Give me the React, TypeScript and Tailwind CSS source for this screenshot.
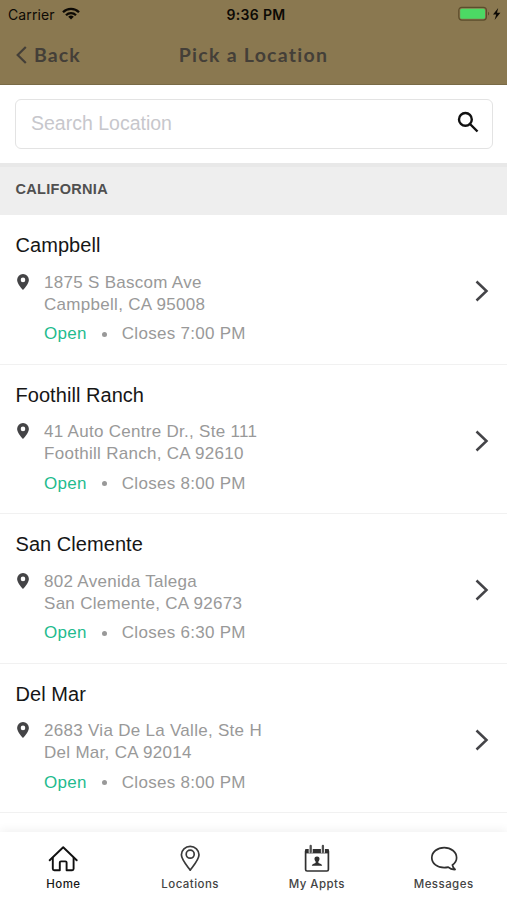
import React from "react";

const locations = [
  { name: "Campbell", street: "1875 S Bascom Ave", city: "Campbell, CA 95008", closes: "7:00 PM" },
  { name: "Foothill Ranch", street: "41 Auto Centre Dr., Ste 111", city: "Foothill Ranch, CA 92610", closes: "8:00 PM" },
  { name: "San Clemente", street: "802 Avenida Talega", city: "San Clemente, CA 92673", closes: "6:30 PM" },
  { name: "Del Mar", street: "2683 Via De La Valle, Ste H", city: "Del Mar, CA 92014", closes: "8:00 PM" },
];

function WifiIcon() {
  return (
    <svg className="mb-[2px] ml-[7px] h-[13px] w-[18px]" viewBox="0 0 18 13" fill="none" stroke="#0d0a05" strokeWidth="2.3">
      <path d="M1 5.2a11.3 11.3 0 0 1 16 0" />
      <path d="M4 8.2a7.1 7.1 0 0 1 10 0" />
      <path d="M9 12.6 6.2 9.8a4 4 0 0 1 5.6 0z" fill="#0d0a05" stroke="none" />
    </svg>
  );
}

function BatteryIcon() {
  return (
    <svg className="mb-[1px] h-[16px] w-[46px]" viewBox="0 0 46 16">
      <rect x="0.8" y="1.3" width="27.6" height="12.8" rx="3" fill="none" stroke="#5c4d2c" strokeWidth="1.2" />
      <rect x="2.2" y="2.7" width="24.8" height="10" rx="1.5" fill="#4cd964" />
      <path d="M30 5.8c1.6.5 1.6 3.3 0 3.8z" fill="#5c4d2c" />
      <path d="M40.2 2 35 8.6h3.2L36.6 14l5.8-7.2h-3.4z" fill="#0d0a05" />
    </svg>
  );
}

function PinIcon() {
  return (
    <svg className="mt-[2px] ml-[1px] h-[16px] w-[12px] shrink-0" viewBox="0 0 12 16">
      <path
        fillRule="evenodd"
        fill="#444446"
        d="M6 0a5.9 5.9 0 0 0-5.9 5.900C.1 10 6 16 6 16s5.900-6 5.900-10.100A5.900 5.900 0 0 0 6 0zm0 3.600a2.300 2.300 0 1 1 0 4.600 2.300 2.300 0 0 1 0-4.600z"
      />
    </svg>
  );
}

function HomeIcon() {
  return (
    <svg className="h-[30px] w-[30px]" viewBox="0 0 30 30" fill="none" stroke="#111" strokeWidth="1.900" strokeLinecap="round" strokeLinejoin="round">
      <path d="M1.700 17.300 15.200 4.200l13.500 13.100" />
      <path d="M4.800 15v10.700c0 1 .5 1.500 1.500 1.500h5.500v-7.600c0-.8.4-1.200 1.200-1.200h4.400c.8 0 1.200.4 1.200 1.200v7.600h5.500c1 0 1.500-.5 1.500-1.500V15" />
    </svg>
  );
}

function MapIcon() {
  return (
    <svg className="h-[30px] w-[30px]" viewBox="0 0 30 30" fill="none" stroke="#3a3a3a" strokeWidth="1.700" strokeLinejoin="round">
      <path d="M15.200 27.200C12.200 23 6.400 16.600 6.400 11.800a8.800 8.500 0 0 1 17.600 0C24 16.600 18.200 23 15.200 27.200z" />
      <circle cx="15.200" cy="11.200" r="4" />
    </svg>
  );
}

function CalendarIcon() {
  return (
    <svg className="h-[30px] w-[30px]" viewBox="0 0 30 30" fill="none">
      <rect x="3.600" y="6.800" width="22.800" height="21.200" rx="1.500" stroke="#303030" strokeWidth="1.700" />
      <path d="M3.300 6.200h23.400v4.200H3.300z" fill="#303030" />
      <path d="M8.700 2.400v7.300M20.900 2.400v7.300" stroke="#fff" strokeWidth="4" />
      <path d="M8.700 3v6M20.900 3v6" stroke="#505050" strokeWidth="2.300" strokeLinecap="round" />
      <path d="M15 13.400c-1.900 0-2.700 1.200-2.500 2.800.1 1 .6 1.700 1.100 2.200v1.500c-1.800.6-3.600.9-3.800 2.900h10.400c-.2-2-2-2.300-3.800-2.900v-1.500c.5-.5 1-1.200 1.100-2.200.2-1.600-.6-2.800-2.500-2.800z" fill="#303030" />
    </svg>
  );
}

function MessageIcon() {
  return (
    <svg className="h-[30px] w-[30px]" viewBox="0 0 30 30" fill="none" stroke="#303030" strokeWidth="1.700" strokeLinejoin="round">
      <path d="M23.400 22c2.700-1.900 4.200-4.200 4.200-7.300 0-5.700-5.600-10.100-12.400-10.100S2.800 9 2.800 14.700s5.600 10 12.400 10c1.400 0 2.700-.2 4-.5 1.800 1.600 4.200 2.500 6.900 2.300-1.600-1.200-2.400-2.700-2.700-4.500z" />
    </svg>
  );
}

const tabs = [
  { label: "Home", icon: <HomeIcon />, color: "text-[#161616]" },
  { label: "Locations", icon: <MapIcon />, color: "text-[#444]" },
  { label: "My Appts", icon: <CalendarIcon />, color: "text-[#444]" },
  { label: "Messages", icon: <MessageIcon />, color: "text-[#444]" },
];

export default function App() {
  return (
    <div className="flex h-[900px] w-[507px] flex-col overflow-hidden bg-white font-['Liberation_Sans',sans-serif]">
      {/* Header */}
      <header className="h-[85px] shrink-0 border-b border-[#796a46] bg-[#8a7850]">
        <div className="grid h-[28px] grid-cols-3 items-center font-['Inter',sans-serif] text-[14px] text-[#0d0a05]">
          <div className="flex items-center pl-[8px]">
            <span className="tracking-[0.1px]">Carrier</span>
            <WifiIcon />
          </div>
          <span className="pl-[5px] text-center font-semibold tracking-[0.35px]">9:36 PM</span>
          <div className="flex justify-end pr-[3px]">
            <BatteryIcon />
          </div>
        </div>
        <div className="grid h-[54px] grid-cols-[1fr_151px_1fr] items-center font-['Lato',sans-serif] text-[19.5px] font-bold text-[#443f38]">
          <div className="flex items-center pl-[16px]">
            <svg className="h-[18px] w-[11px]" viewBox="0 0 11 18" fill="none" stroke="currentColor" strokeWidth="2.200">
              <path d="M9.800 1 1.700 9l8.100 8" />
            </svg>
            <span className="ml-[7px] tracking-[1.1px]">Back</span>
          </div>
          <h1 className="text-center tracking-[1.25px] whitespace-nowrap">Pick a Location</h1>
        </div>
      </header>

      {/* Search */}
      <div className="h-[78px] shrink-0 px-[15px] pt-[14px]">
        <div className="-mr-px flex h-[50px] items-center justify-between rounded-[6px] border border-[#e3e3e3] pr-[13px] pl-[15px]">
          <span className="text-[19.5px] text-[#c7c7cc]">Search Location</span>
          <svg className="mb-[4px] h-[22px] w-[22px]" viewBox="0 0 22 22" fill="none" stroke="#111" strokeWidth="2.400">
            <circle cx="8.400" cy="8.400" r="6.400" />
            <path d="m13 13 7.500 7.500" />
          </svg>
        </div>
      </div>

      {/* Section title */}
      <div className="flex h-[52px] shrink-0 items-center border-t-4 border-[#e8e8e8] bg-[#eeeeee] pb-[2px] pl-[15.5px] text-[14.5px] font-bold tracking-[0.3px] text-[#505050]">
        CALIFORNIA
      </div>

      {/* Locations */}
      <div className="min-h-0 flex-1 overflow-hidden">
        {locations.map((item) => (
          <div key={item.name} className="flex h-[149.5px] items-center justify-between border-b border-[#f1f1f1] pr-[18px] pl-[15.5px]">
            <div>
              <h2 className="text-[20px] leading-[24px] tracking-[0.05px] text-[#161616]">{item.name}</h2>
              <div className="mt-[14.5px] flex text-[17px] leading-[22px] tracking-[0.29px] text-[#999]">
                <PinIcon />
                <div className="ml-[15.5px]">
                  <p>{item.street}</p>
                  <p>{item.city}</p>
                  <div className="mt-[7.5px] flex items-center">
                    <span className="text-[#1fbb8e]">Open</span>
                    <span className="mx-[15px] h-[5px] w-[5px] rounded-full bg-[#999]" />
                    <span>Closes {item.closes}</span>
                  </div>
                </div>
              </div>
            </div>
            <svg className="mt-[4px] h-[22px] w-[14px]" viewBox="0 0 14 22" fill="none" stroke="#444448" strokeWidth="2.500">
              <path d="m1.500 1.500 10 9.500-10 9.500" />
            </svg>
          </div>
        ))}
      </div>

      {/* Tab bar */}
      <nav className="grid h-[68px] shrink-0 grid-cols-4 bg-white pt-[11px] shadow-[0_-1px_10px_rgba(0,0,0,0.07)]">
        {tabs.map((tab) => (
          <div key={tab.label} className="flex flex-col items-center">
            {tab.icon}
            <span className={`mt-[3px] font-['Inter',sans-serif] text-[11.5px] leading-[16px] font-medium tracking-[0.45px] ${tab.color}`}>
              {tab.label}
            </span>
          </div>
        ))}
      </nav>
    </div>
  );
}
